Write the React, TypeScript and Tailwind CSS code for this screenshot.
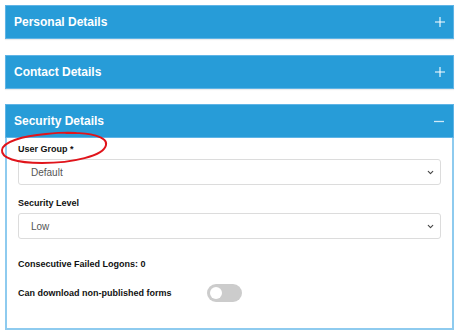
import { ChevronDown } from "lucide-react";

function PanelHeader({ title, open }: { title: string; open?: boolean }) {
  return (
    <div className="h-[34px] bg-[#279cd8] border border-[#5fb4e6] flex items-center justify-between pl-[8px] pr-[8px]">
      <span className="text-white font-bold text-[12px]">{title}</span>
      {open ? (
        <svg width="10" height="10" viewBox="0 0 10 10" className="mr-[1px]">
          <path d="M0 5.5h10" stroke="#cfe9f8" strokeWidth="1.3" />
        </svg>
      ) : (
        <svg width="10" height="10" viewBox="0 0 10 10">
          <path d="M0 5h10M5 0v10" stroke="#ffffff" strokeWidth="1.1" />
        </svg>
      )}
    </div>
  );
}

function Select({ value }: { value: string }) {
  return (
    <div className="h-[26px] border border-[#dcdcdc] rounded-[3px] bg-white flex items-center justify-between pl-[12px] pr-[5px]">
      <span className="text-[10px] text-[#555]">{value}</span>
      <ChevronDown className="w-[9px] h-[9px] text-[#444]" strokeWidth={3} />
    </div>
  );
}

export default function App() {
  return (
    <div
      className="relative w-[460px] h-[336px] bg-white pt-[5px] pl-[5px]"
      style={{ fontFamily: '"Liberation Sans", Arial, sans-serif' }}
    >
      <div className="w-[449px] flex flex-col gap-[16px]">
        <div className="shadow-[0_1px_1px_rgba(0,0,0,0.08)]">
          <PanelHeader title="Personal Details" />
        </div>
        <div className="shadow-[0_1px_1px_rgba(0,0,0,0.08)]">
          <PanelHeader title="Contact Details" />
        </div>
        <div className="-mt-[1px]">
          <PanelHeader title="Security Details" open />
          <div className="border-2 border-t-0 border-[#8ecbef] pt-[5px] px-[11px] pb-[26px] text-[9px] text-[#111]">
            <div className="font-bold leading-[12px]">User Group *</div>
            <div className="mt-[4px]">
              <Select value="Default" />
            </div>
            <div className="font-bold leading-[12px] mt-[12px]">Security Level</div>
            <div className="mt-[4px]">
              <Select value="Low" />
            </div>
            <div className="font-bold leading-[12px] mt-[19px]">Consecutive Failed Logons: 0</div>
            <div className="flex items-center mt-[14px]">
              <span className="font-bold leading-[12px] w-[189px]">Can download non-published forms</span>
              <div className="w-[35px] h-[18px] rounded-full bg-[#cccccc] flex items-center pl-[3px]">
                <div className="w-[12px] h-[12px] rounded-full bg-white" />
              </div>
            </div>
          </div>
        </div>
      </div>

      {/* red annotation ellipse */}
      <svg
        className="absolute left-0 top-[128px] pointer-events-none"
        width="112"
        height="40"
        viewBox="0 0 112 40"
      >
        <path
          d="M66 5 C 90 4, 108 9, 106 17 C 104 28, 72 35, 42 35 C 16 35, 1 30, 2 22 C 3 14, 22 8, 46 6 C 56 5, 66 4, 76 5"
          fill="none"
          stroke="#e0141b"
          strokeWidth="1.9"
          strokeLinecap="round"
        />
      </svg>
    </div>
  );
}
